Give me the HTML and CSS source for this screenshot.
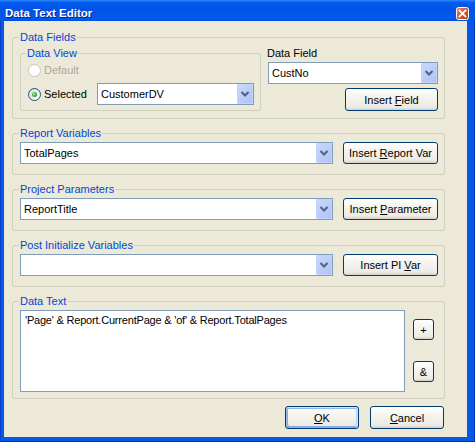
FILE: index.html
```html
<!DOCTYPE html>
<html>
<head>
<meta charset="utf-8">
<title>Data Text Editor</title>
<link rel="stylesheet" href="styles.css">
</head>
<body>
<div class="window">
  <div class="titlebar">
    <span class="title">Data Text Editor</span>
    <span class="close">
      <svg width="13" height="13" viewBox="0 0 13 13">
        <defs>
          <linearGradient id="cg" x1="0" y1="0" x2="1" y2="1">
            <stop offset="0" stop-color="#ee8d6e"/>
            <stop offset="0.45" stop-color="#dc5630"/>
            <stop offset="1" stop-color="#c23a17"/>
          </linearGradient>
        </defs>
        <rect x="0.5" y="0.5" width="12" height="12" rx="2" fill="url(#cg)" stroke="#ffffff"/>
        <path d="M3.6 3.6 L9.4 9.4 M9.4 3.6 L3.6 9.4" stroke="#ffffff" stroke-width="1.9" stroke-linecap="square"/>
      </svg>
    </span>
  </div>
  <div class="client">
    <div class="group g-fields">
      <span class="legend">Data Fields</span>
      <div class="group g-view">
        <span class="legend sub">Data View</span>
        <div class="radio-row disabled">
          <span class="radio"></span><span class="rlabel">Default</span>
        </div>
        <div class="radio-row sel-row">
          <span class="radio checked"><span class="dot"></span></span><span class="rlabel">Selected</span>
          <div class="combo combo-dv">
            <span class="ctext">CustomerDV</span>
            <span class="drop"><svg width="16" height="20" viewBox="0 0 16 20"><path d="M4.5 8 L8 11.5 L11.5 8" fill="none" stroke="#4d6185" stroke-width="2"/></svg></span>
          </div>
        </div>
      </div>
      <div class="field-col">
        <span class="flabel">Data Field</span>
        <div class="combo combo-field">
          <span class="ctext">CustNo</span>
          <span class="drop"><svg width="16" height="20" viewBox="0 0 16 20"><path d="M4.5 8 L8 11.5 L11.5 8" fill="none" stroke="#4d6185" stroke-width="2"/></svg></span>
        </div>
        <button class="btn btn-field">Insert <u>F</u>ield</button>
      </div>
    </div>

    <div class="group g-row">
      <span class="legend">Report Variables</span>
      <div class="combo combo-wide">
        <span class="ctext">TotalPages</span>
        <span class="drop"><svg width="16" height="20" viewBox="0 0 16 20"><path d="M4.5 8 L8 11.5 L11.5 8" fill="none" stroke="#4d6185" stroke-width="2"/></svg></span>
      </div>
      <button class="btn btn-side">Insert <u>R</u>eport Var</button>
    </div>

    <div class="group g-row">
      <span class="legend">Project Parameters</span>
      <div class="combo combo-wide">
        <span class="ctext">ReportTitle</span>
        <span class="drop"><svg width="16" height="20" viewBox="0 0 16 20"><path d="M4.5 8 L8 11.5 L11.5 8" fill="none" stroke="#4d6185" stroke-width="2"/></svg></span>
      </div>
      <button class="btn btn-side">Insert <u>P</u>arameter</button>
    </div>

    <div class="group g-row">
      <span class="legend">Post Initialize Variables</span>
      <div class="combo combo-wide">
        <span class="ctext"></span>
        <span class="drop"><svg width="16" height="20" viewBox="0 0 16 20"><path d="M4.5 8 L8 11.5 L11.5 8" fill="none" stroke="#4d6185" stroke-width="2"/></svg></span>
      </div>
      <button class="btn btn-side">Insert PI <u>V</u>ar</button>
    </div>

    <div class="group g-text">
      <span class="legend">Data Text</span>
      <div class="textbox">'Page' &amp; Report.CurrentPage &amp; 'of' &amp; Report.TotalPages</div>
      <div class="op-col">
        <button class="btn btn-op">+</button>
        <button class="btn btn-op">&amp;</button>
      </div>
    </div>

    <div class="actions">
      <button class="btn btn-act default"><u>O</u>K</button>
      <button class="btn btn-act"><u>C</u>ancel</button>
    </div>
  </div>
</div>
</body>
</html>
```

FILE: styles.css
```css
* {
  box-sizing: border-box;
}

html, body {
  margin: 0;
  padding: 0;
}

body {
  width: 475px;
  height: 442px;
  overflow: hidden;
  font-family: "Liberation Sans", Arial, sans-serif;
  font-size: 11px;
  line-height: 13px;
  color: #000000;
}

.window {
  width: 475px;
  height: 442px;
  background: #0858e6;
  box-shadow: inset 1px 0 #0a3fd0, inset -1px -1px #0030b8;
  display: flex;
  flex-direction: column;
}

.titlebar {
  height: 21px;
  flex: none;
  display: flex;
  align-items: flex-start;
  background: linear-gradient(180deg, #2f8cff 0, #0a5ef0 2px, #0055ea 6px, #0054e6 50%, #0058ee 85%, #0050e0 100%);
}

.title {
  margin: 7px 0 0 5px;
  color: #ffffff;
  font-weight: bold;
  font-size: 11.5px;
  line-height: 13px;
  text-shadow: 1px 1px #0a1e8c;
}

.close {
  margin: 7px 6px 0 auto;
  width: 13px;
  height: 13px;
  display: block;
}

.close svg {
  display: block;
}

.client {
  margin-left: 4px;
  width: 463px;
  height: 416px;
  background: #ece9d8;
  padding: 16px 0 0 8px;
  display: flex;
  flex-direction: column;
  align-items: flex-start;
}

.group {
  position: relative;
  border: 1px solid #d0d0bf;
  border-radius: 3px;
  width: 433px;
}

.legend {
  position: absolute;
  top: -7px;
  left: 6px;
  padding: 0 1px;
  background: #ece9d8;
  color: #0046d5;
  white-space: nowrap;
}

.legend.sub {
  left: 5px;
}

/* Data Fields */
.g-fields {
  display: flex;
  align-items: flex-start;
  padding: 15px 6px 7px 7px;
}

.g-view {
  width: 241px;
  padding: 10px 6px 5px 7px;
  display: flex;
  flex-direction: column;
}

.radio-row {
  display: flex;
  align-items: center;
  height: 13px;
}

.radio-row.sel-row {
  height: 22px;
  margin-top: 6px;
}

.radio {
  width: 13px;
  height: 13px;
  border-radius: 50%;
  border: 1px solid #1c5180;
  background: linear-gradient(135deg, #dcd8ca 0%, #f3f2ec 55%, #ffffff 100%);
  display: flex;
  align-items: center;
  justify-content: center;
  flex: none;
}

.disabled .radio {
  border-color: #cac8bb;
  background: #ffffff;
}

.disabled .rlabel {
  color: #aca899;
}

.rlabel {
  margin-left: 3px;
}

.dot {
  width: 5px;
  height: 5px;
  border-radius: 50%;
  background: radial-gradient(circle at 40% 40%, #b4f0b4 0, #3cba3c 45%, #1a8c1a 100%);
}

.combo {
  height: 22px;
  border: 1px solid #7f9db9;
  background: #ffffff;
  display: flex;
  align-items: stretch;
}

.ctext {
  flex: 1;
  padding-left: 3px;
  line-height: 20px;
  white-space: nowrap;
  overflow: hidden;
}

.drop {
  width: 16px;
  flex: none;
  border-radius: 2px;
  background: linear-gradient(135deg, #cbdafd 0%, #bccdf8 50%, #adc2f4 100%);
  box-shadow: inset 0 0 0 1px #c2d3fb;
}

.drop svg {
  display: block;
}

.combo-dv {
  width: 157px;
  margin-left: auto;
}

.field-col {
  width: 170px;
  margin-left: 7px;
  margin-top: -6px;
  display: flex;
  flex-direction: column;
}

.flabel {
  height: 13px;
  margin-left: -1px;
}

.combo-field {
  width: 170px;
  margin-top: 2px;
}

.btn {
  font-family: "Liberation Sans", Arial, sans-serif;
  font-size: 11px;
  color: #000000;
  border: 1px solid #003c74;
  border-radius: 3px;
  background: linear-gradient(180deg, #ffffff 0%, #f4f3ee 40%, #ecebe6 86%, #d6d0c5 100%);
  padding: 0;
  margin: 0;
  line-height: 20px;
  text-align: center;
  white-space: nowrap;
}

.btn u {
  text-underline-offset: 1px;
}

.btn-field {
  width: 93px;
  height: 23px;
  margin-top: 4px;
  align-self: flex-end;
}

/* combo + button rows */
.g-row {
  display: flex;
  align-items: flex-start;
  gap: 10px;
  padding: 8px 6px 10px 7px;
  margin-top: 14px;
}

.combo-wide {
  width: 313px;
}

.btn-side {
  width: 95px;
  height: 22px;
}

/* Data Text */
.g-text {
  display: flex;
  align-items: flex-start;
  padding: 8px 10px 6px 7px;
  margin-top: 14px;
}

.textbox {
  width: 385px;
  height: 82px;
  border: 1px solid #7f9db9;
  background: #ffffff;
  padding: 3px 3px 3px 4px;
  white-space: nowrap;
  letter-spacing: -0.2px;
}

.op-col {
  margin-left: 8px;
  padding-top: 9px;
  display: flex;
  flex-direction: column;
  gap: 21px;
}

.btn-op {
  width: 21px;
  height: 21px;
  line-height: 18px;
}

.actions {
  width: 433px;
  margin-top: 7px;
  padding-right: 1px;
  display: flex;
  justify-content: flex-end;
  gap: 11px;
}

.btn-act {
  width: 74px;
  height: 23px;
}

.btn-act.default {
  box-shadow: inset -1px 1px #cee7ff, inset 1px 2px #98b8ea, inset -2px 2px #bcd4f6, inset 1px -1px #89ade4, inset 2px -2px #89ade4;
}
```
